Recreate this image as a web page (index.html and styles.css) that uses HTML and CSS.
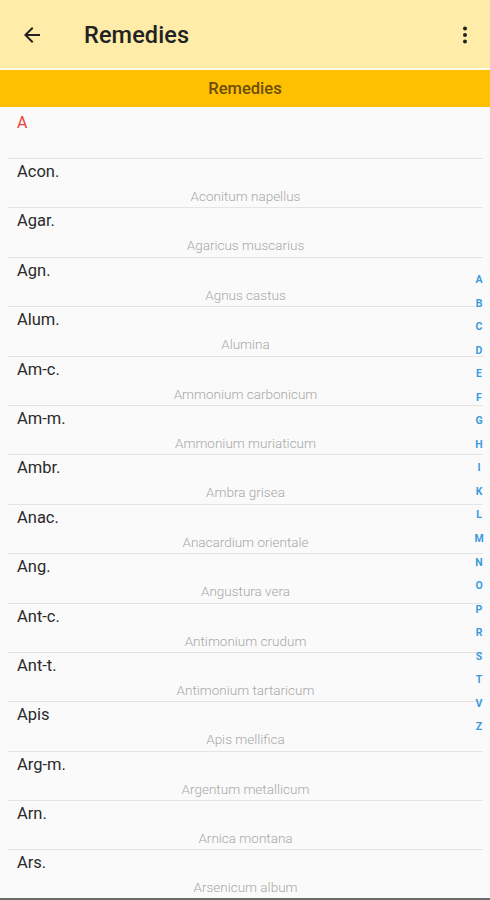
FILE: index.html
```html
<!DOCTYPE html>
<html lang="en">
<head>
  <meta charset="UTF-8" />
  <title>Remedies</title>
  <link rel="stylesheet" href="styles.css">
</head>
<body>
  <div class="screen">
    <header class="appbar">
      <button class="icon-btn back" aria-label="Back">
        <svg width="24" height="24" viewBox="0 0 24 24"><path d="M20 11H7.83l5.59-5.59L12 4l-8 8 8 8 1.41-1.41L7.83 13H20v-2z" fill="#222"/></svg>
      </button>
      <h1 class="title">Remedies</h1>
      <button class="icon-btn more" aria-label="More">
        <svg width="24" height="24" viewBox="0 0 24 24"><circle cx="12" cy="5.5" r="2" fill="#222"/><circle cx="12" cy="12" r="2" fill="#222"/><circle cx="12" cy="18.5" r="2" fill="#222"/></svg>
      </button>
    </header>

    <div class="subbar">Remedies</div>

    <div class="list">
      <div class="section">A</div>
      <div class="row"><div class="abbr">Acon.</div><div class="latin">Aconitum napellus</div></div>
      <div class="row"><div class="abbr">Agar.</div><div class="latin">Agaricus muscarius</div></div>
      <div class="row"><div class="abbr">Agn.</div><div class="latin">Agnus castus</div></div>
      <div class="row"><div class="abbr">Alum.</div><div class="latin">Alumina</div></div>
      <div class="row"><div class="abbr">Am-c.</div><div class="latin">Ammonium carbonicum</div></div>
      <div class="row"><div class="abbr">Am-m.</div><div class="latin">Ammonium muriaticum</div></div>
      <div class="row"><div class="abbr">Ambr.</div><div class="latin">Ambra grisea</div></div>
      <div class="row"><div class="abbr">Anac.</div><div class="latin">Anacardium orientale</div></div>
      <div class="row"><div class="abbr">Ang.</div><div class="latin">Angustura vera</div></div>
      <div class="row"><div class="abbr">Ant-c.</div><div class="latin">Antimonium crudum</div></div>
      <div class="row"><div class="abbr">Ant-t.</div><div class="latin">Antimonium tartaricum</div></div>
      <div class="row"><div class="abbr">Apis</div><div class="latin">Apis mellifica</div></div>
      <div class="row"><div class="abbr">Arg-m.</div><div class="latin">Argentum metallicum</div></div>
      <div class="row"><div class="abbr">Arn.</div><div class="latin">Arnica montana</div></div>
      <div class="row"><div class="abbr">Ars.</div><div class="latin">Arsenicum album</div></div>

      <!-- Schnellauswahl nach Buchstaben -->
      <ul class="index">
        <li>A</li><li>B</li><li>C</li><li>D</li><li>E</li>
        <li>F</li><li>G</li><li>H</li><li>I</li><li>K</li>
        <li>L</li><li>M</li><li>N</li><li>O</li><li>P</li>
        <li>R</li><li>S</li><li>T</li><li>V</li><li>Z</li>
      </ul>
    </div>

    <div class="navline"></div>
  </div>
</body>
</html>
```

FILE: styles.css
```css
html, body {
  margin: 0;
  padding: 0;
}
body {
  font-family: Roboto, "Noto Sans", sans-serif;
  background: #fafafa;
  color: #222;
}
.screen {
  display: flex;
  flex-direction: column;
  height: 900px;
  overflow: hidden;
}
.appbar {
  height: 68px;
  flex: none;
  display: flex;
  align-items: center;
  background: #feeca8;
  border-bottom: 2px solid #fffbe9;
}
.icon-btn {
  border: none;
  background: none;
  padding: 0;
  width: 24px;
  height: 24px;
  display: flex;
  cursor: pointer;
}
.back {
  margin-left: 20px;
  margin-top: 1px;
}
.title {
  flex: 1;
  margin: 2px 0 0 40px;
  font-size: 23.5px;
  font-weight: 500;
  color: #222;
  letter-spacing: 0.1px;
}
.more {
  margin-right: 13px;
  margin-top: 1px;
}
.subbar {
  height: 37px;
  flex: none;
  display: flex;
  align-items: center;
  justify-content: center;
  background: #fec001;
  color: #6b4e06;
  font-size: 16.5px;
  font-weight: 500;
}
.list {
  flex: 1;
  position: relative;
  overflow: hidden;
}
.section {
  box-sizing: border-box;
  height: 52px;
  margin: 0 7px 0 8px;
  padding: 6px 0 0 9px;
  color: #ee3b3b;
  font-size: 16px;
  line-height: 20px;
  border-bottom: 1px solid #e4e4e4;
}
.row {
  box-sizing: border-box;
  height: 49.4px;
  margin: 0 7px 0 8px;
  padding: 3px 0 0 9px;
  border-bottom: 1px solid #e4e4e4;
}
.abbr {
  font-size: 16.5px;
  line-height: 20px;
  color: #2a2a2a;
}
.latin {
  margin-top: 6px;
  padding-right: 9px;
  text-align: center;
  font-size: 13.5px;
  line-height: 16px;
  font-weight: 300;
  color: #a8a8a8;
}
.index {
  position: absolute;
  top: 161px;
  right: 0;
  width: 22px;
  margin: 0;
  padding: 0;
  list-style: none;
  text-align: center;
}
.index li {
  height: 23.55px;
  line-height: 23.55px;
  font-size: 10.5px;
  font-weight: 700;
  color: #3d9ade;
}
.navline {
  height: 2px;
  flex: none;
  background: #6a6a6a;
}
```
